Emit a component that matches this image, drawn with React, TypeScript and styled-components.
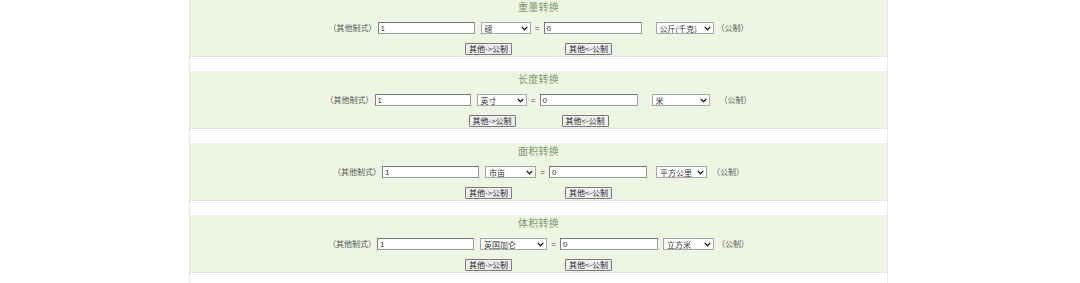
import React from "react";
import styled, { createGlobalStyle } from "styled-components";

interface ConvRow {
  title: string;
  from: string;
  fromW: number;
  to: string;
  toW: number;
  inputW: number;
  gapTo: number;
  gapUnit: number;
  btnGap: number;
}

const rows: ConvRow[] = [
  { title: "重量转换", from: "磅", fromW: 50, to: "公斤(千克)", toW: 58, inputW: 97, gapTo: 14, gapUnit: 3, btnGap: 53 },
  { title: "长度转换", from: "英寸", fromW: 50, to: "米", toW: 58, inputW: 96, gapTo: 14, gapUnit: 10, btnGap: 46 },
  { title: "面积转换", from: "市亩", fromW: 51, to: "平方公里", toW: 51, inputW: 97, gapTo: 9, gapUnit: 5, btnGap: 53 },
  { title: "体积转换", from: "英国加仑", fromW: 67, to: "立方米", toW: 51, inputW: 97, gapTo: 5, gapUnit: 3, btnGap: 53 }
];

const GlobalStyle = createGlobalStyle`
  html, body {
    margin: 0;
    padding: 0;
    background: #ffffff;
    font-family: "Noto Sans CJK SC", "Liberation Sans", sans-serif;
  }
`;

const Page = styled.div`
  width: 1080px;
  height: 283px;
  overflow: hidden;
  background: #ffffff;
`;

// the centred column that holds all four converters
const Column = styled.div`
  width: 697px;
  margin: -1px 0 0 189px;
  border-left: 1px solid #e4eadc;
  border-right: 1px solid #e4eadc;
  padding-bottom: 20px;
`;

const Panel = styled.div`
  height: 58px;
  background: #eef5e3;
  border-bottom: 1px solid #e2ead7;
  box-sizing: border-box;
  margin-bottom: 14px;
  display: flex;
  flex-direction: column;
  align-items: center;
`;

const Title = styled.div`
  height: 16px;
  line-height: 16px;
  font-size: 10px;
  color: #7d9a6f;
  letter-spacing: 0.3px;
`;

const Row = styled.div`
  margin-top: 7px;
  height: 12px;
  display: flex;
  align-items: center;
  font-size: 8px;
  color: #555;
`;

const Label = styled.span<{ $ml?: number }>`
  margin-left: ${(p) => p.$ml ?? 0}px;
  line-height: 12px;
  white-space: nowrap;
  color: #555;
`;

const Field = styled.div<{ $w: number; $ml?: number }>`
  width: ${(p) => p.$w}px;
  height: 12px;
  margin-left: ${(p) => p.$ml ?? 0}px;
  box-sizing: border-box;
  background: #fff;
  border: 1px solid #9a9a9a;
  border-top-color: #767676;
  border-left-color: #7f7f7f;
  padding-left: 2px;
  display: flex;
  align-items: center;
  font-size: 8px;
  color: #333;
  font-family: "Liberation Sans", sans-serif;
`;

const Eq = styled.span`
  width: 13px;
  text-align: center;
  font-size: 8px;
  color: #444;
  font-family: "Liberation Sans", sans-serif;
`;

const Dropdown = styled.div<{ $w: number; $ml?: number }>`
  width: ${(p) => p.$w}px;
  height: 12px;
  margin-left: ${(p) => p.$ml ?? 0}px;
  box-sizing: border-box;
  background: #fff;
  border: 1px solid #a6a6a6;
  display: flex;
  align-items: center;
  justify-content: space-between;
  padding: 0 2px 0 3px;
  font-size: 8px;
  color: #333;
  white-space: nowrap;
  overflow: hidden;
`;

const Buttons = styled.div<{ $gap: number }>`
  margin-top: 9px;
  display: flex;
  gap: ${(p) => p.$gap}px;
`;

const Button = styled.button`
  width: 47px;
  height: 12px;
  padding: 0;
  box-sizing: border-box;
  background: #efefef;
  border: 1px solid #7a7a7a;
  border-radius: 1px;
  font-family: "Noto Sans CJK SC", "Liberation Sans", sans-serif;
  font-size: 8px;
  line-height: 1;
  color: #222;
  white-space: nowrap;
`;

const Chevron = () => (
  <svg width="7" height="5" viewBox="0 0 7 5">
    <path d="M0.8 1 L3.5 3.8 L6.2 1" fill="none" stroke="#222" strokeWidth="1.4" />
  </svg>
);

const Converter = ({ row }: { row: ConvRow }) => (
  <Panel>
    <Title>{row.title}</Title>
    <Row>
      <Label>（其他制式）</Label>
      <Field $w={row.inputW} $ml={1}>1</Field>
      <Dropdown $w={row.fromW} $ml={6}>
        <span>{row.from}</span>
        <Chevron />
      </Dropdown>
      <Eq>=</Eq>
      <Field $w={98}>0</Field>
      <Dropdown $w={row.toW} $ml={row.gapTo}>
        <span>{row.to}</span>
        <Chevron />
      </Dropdown>
      <Label $ml={row.gapUnit}>（公制）</Label>
    </Row>
    <Buttons $gap={row.btnGap}>
      <Button>其他-&gt;公制</Button>
      <Button>其他&lt;-公制</Button>
    </Buttons>
  </Panel>
);

const App = () => (
  <Page>
    <GlobalStyle />
    <Column>
      {rows.map((r) => (
        <Converter key={r.title} row={r} />
      ))}
    </Column>
  </Page>
);

export default App;
